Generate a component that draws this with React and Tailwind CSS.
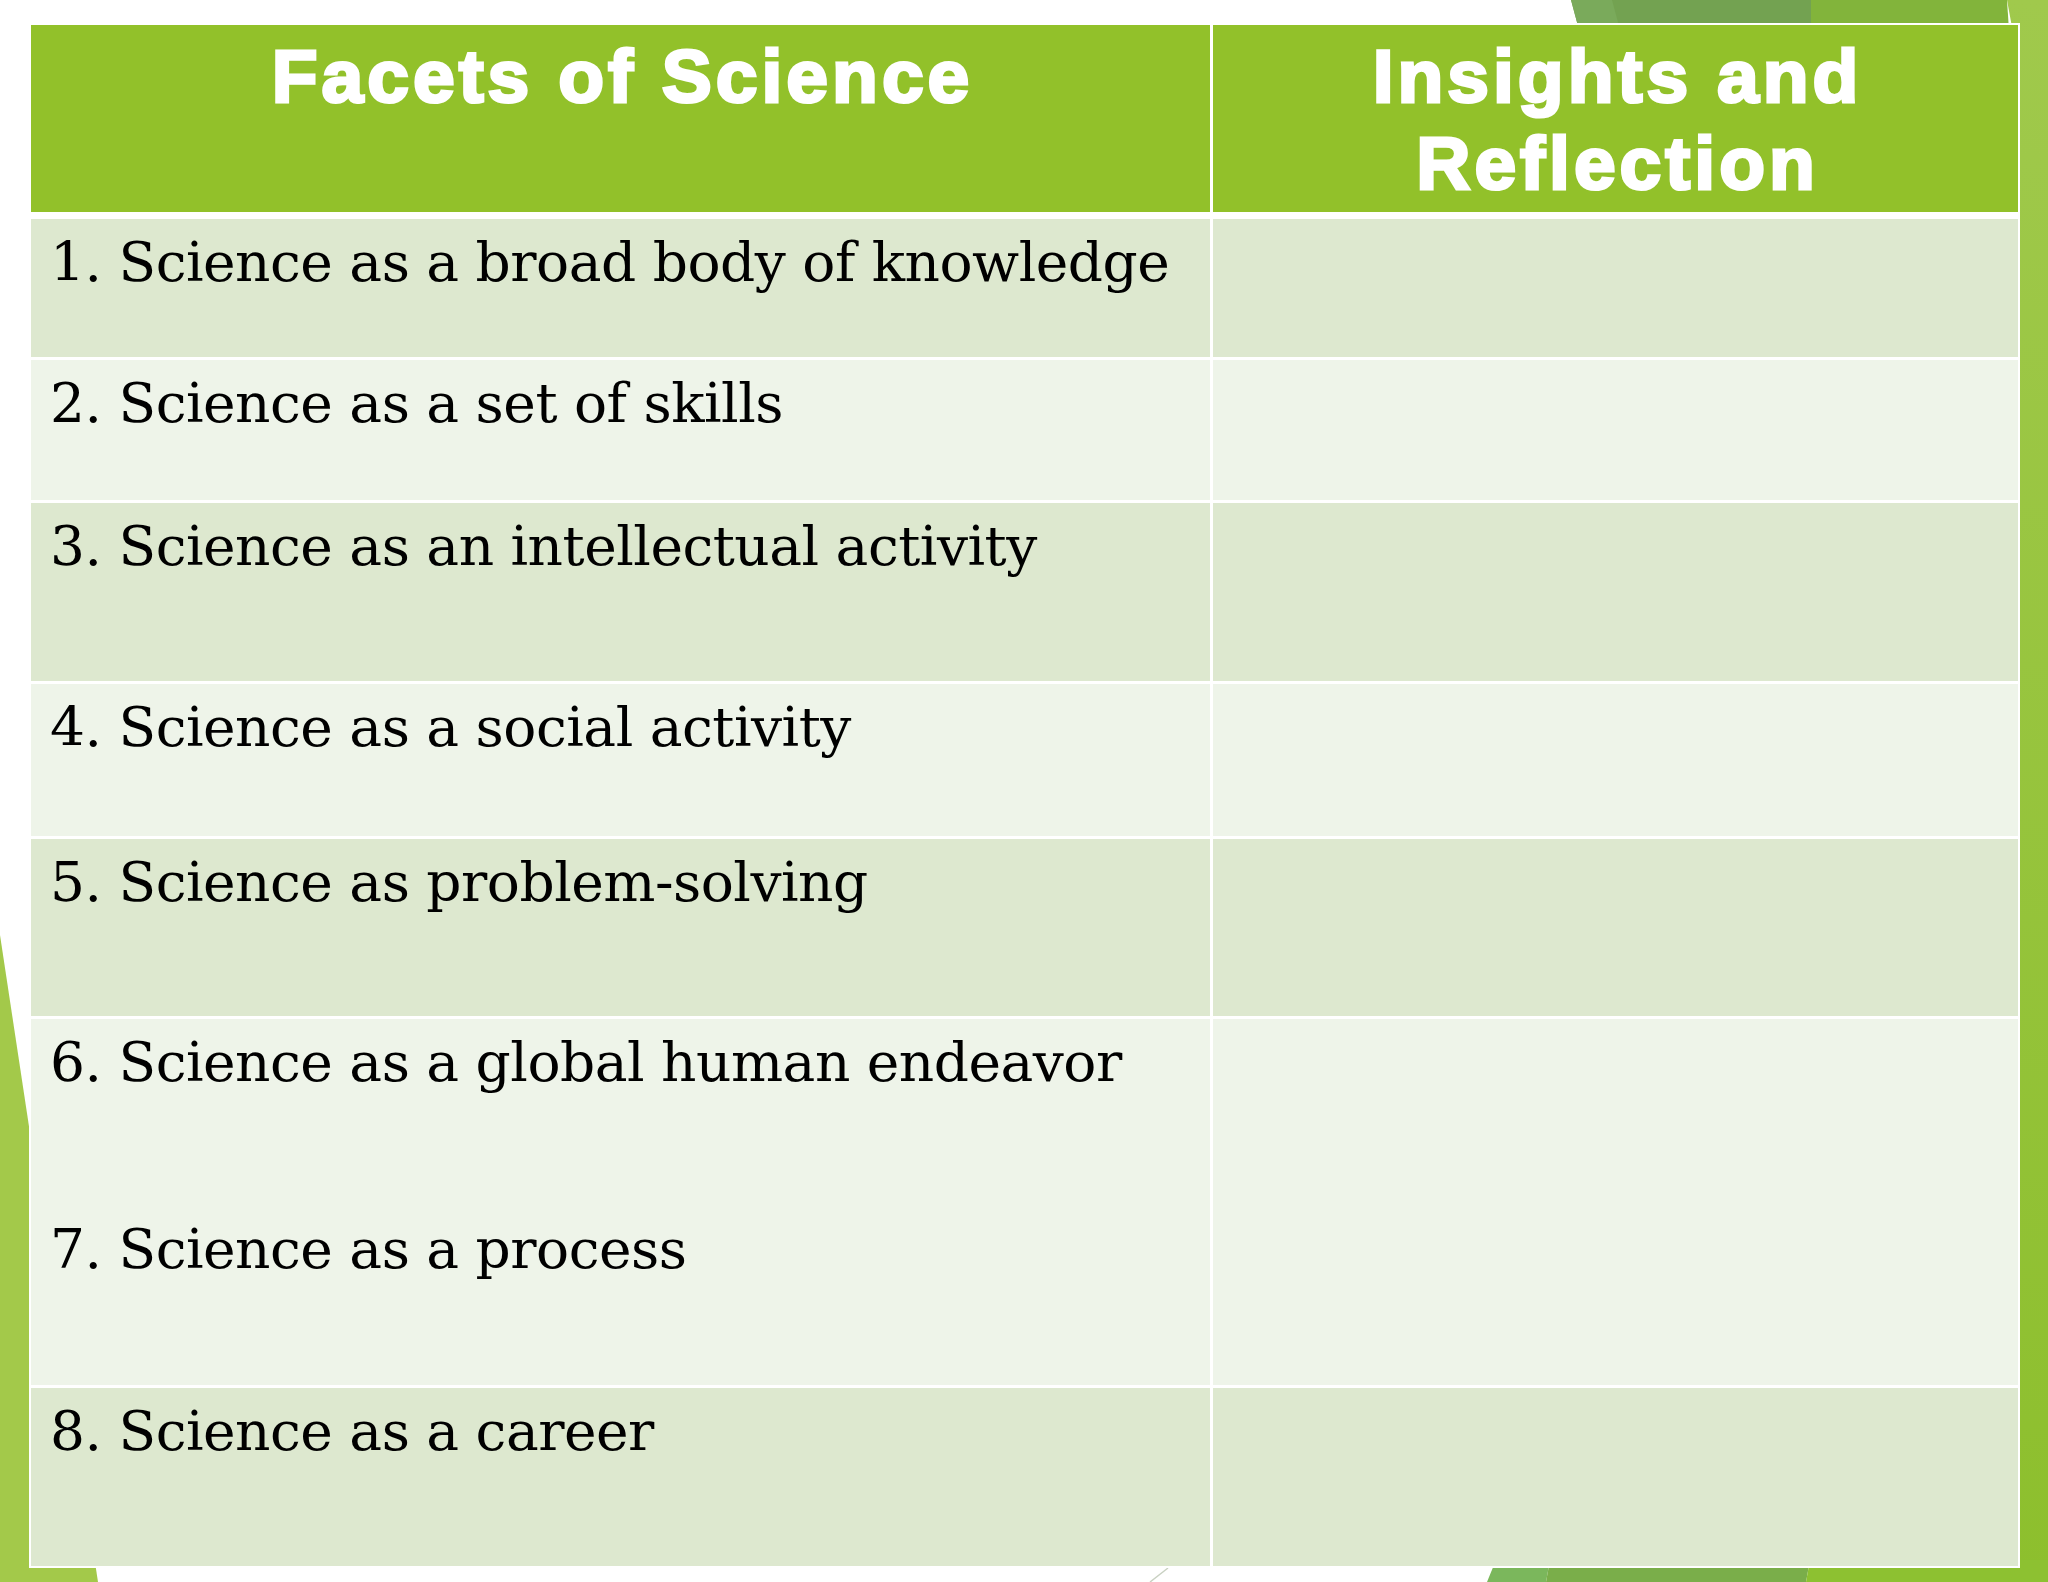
import React from "react";

const rows = [
  { bg: "bg-[#dde8cf]", h: "h-[138px]", items: ["1. Science as a broad body of knowledge"] },
  { bg: "bg-[#eef4e9]", h: "h-[140px]", items: ["2. Science as a set of skills"] },
  { bg: "bg-[#dde8cf]", h: "h-[178px]", items: ["3. Science as an intellectual activity"] },
  { bg: "bg-[#eef4e9]", h: "h-[152px]", items: ["4. Science as a social activity"] },
  { bg: "bg-[#dde8cf]", h: "h-[177px]", items: ["5. Science as problem-solving"] },
  { bg: "bg-[#eef4e9]", h: "h-[366px]", items: ["6. Science as a global human endeavor", "7. Science as a process"] },
  { bg: "bg-[#dde8cf]", h: "h-[178px]", items: ["8. Science as a career"] },
];

function Background() {
  return (
    <svg
      className="absolute inset-0 w-[2048px] h-[1582px]"
      viewBox="0 0 2048 1582"
      xmlns="http://www.w3.org/2000/svg"
    >
      <defs>
        <linearGradient id="rs" x1="0" y1="0" x2="0" y2="1">
          <stop offset="0" stopColor="#a0c94c" />
          <stop offset="1" stopColor="#8dbf2d" />
        </linearGradient>
      </defs>
      <polygon points="0,935 98,1582 0,1582" fill="#a3c94a" />
      <polygon points="1571,0 1811,0 1811,200 1625,200" fill="#73a251" />
      <polygon points="1571,0 1612,0 1619,26 1578,26" fill="#7aaa5b" />
      <polygon points="1811,0 2007,0 2020,200 1811,200" fill="#82b43b" />
      <polygon points="2007,0 2048,0 2048,1582 2020,1582 2018,60" fill="url(#rs)" />
      <polygon points="1496,1560 1550,1560 1546,1582 1487,1582" fill="#7bb75c" />
      <polygon points="1550,1560 1810,1560 1806,1582 1546,1582" fill="#7aae4a" />
      <polygon points="1810,1560 2048,1560 2048,1582 1806,1582" fill="#8dc131" />
      <line x1="1168" y1="1568" x2="1150" y2="1582" stroke="#c9d1c2" strokeWidth="1.5" />
    </svg>
  );
}

export default function App() {
  return (
    <div className="relative w-[2048px] h-[1582px] bg-white overflow-hidden">
      <Background />
      <div className="relative ml-[29px] pt-[23px]">
        <div className="w-[1991px] bg-white p-[2px] flex flex-col gap-[3px]">
          <div className="grid grid-cols-[1179px_805px] gap-x-[3px] h-[187px] mb-[4px]">
            <div className="bg-[#92c12a] text-white text-center font-['Liberation_Sans',Arial,sans-serif] font-bold text-[75px] leading-[87px] tracking-[4px] pl-[4px] pt-[8px] [-webkit-text-stroke:3px_white]">
              Facets of Science
            </div>
            <div className="bg-[#92c12a] text-white text-center font-['Liberation_Sans',Arial,sans-serif] font-bold text-[75px] leading-[87px] tracking-[4px] pl-[4px] pt-[8px] [-webkit-text-stroke:3px_white]">
              Insights and
              <br />
              Reflection
            </div>
          </div>
          {rows.map((r, i) => (
            <div key={i} className={`grid grid-cols-[1179px_805px] gap-x-[3px] ${r.h}`}>
              <div className={`${r.bg} pl-[19px] pt-[10px] flex flex-col gap-[121px] font-['DejaVu_Serif',serif] text-[55px] leading-[66px] tracking-[-0.5px] text-black`}>
                {r.items.map((t, j) => (
                  <p key={j} className="whitespace-nowrap">{t}</p>
                ))}
              </div>
              <div className={r.bg}></div>
            </div>
          ))}
        </div>
      </div>
    </div>
  );
}
